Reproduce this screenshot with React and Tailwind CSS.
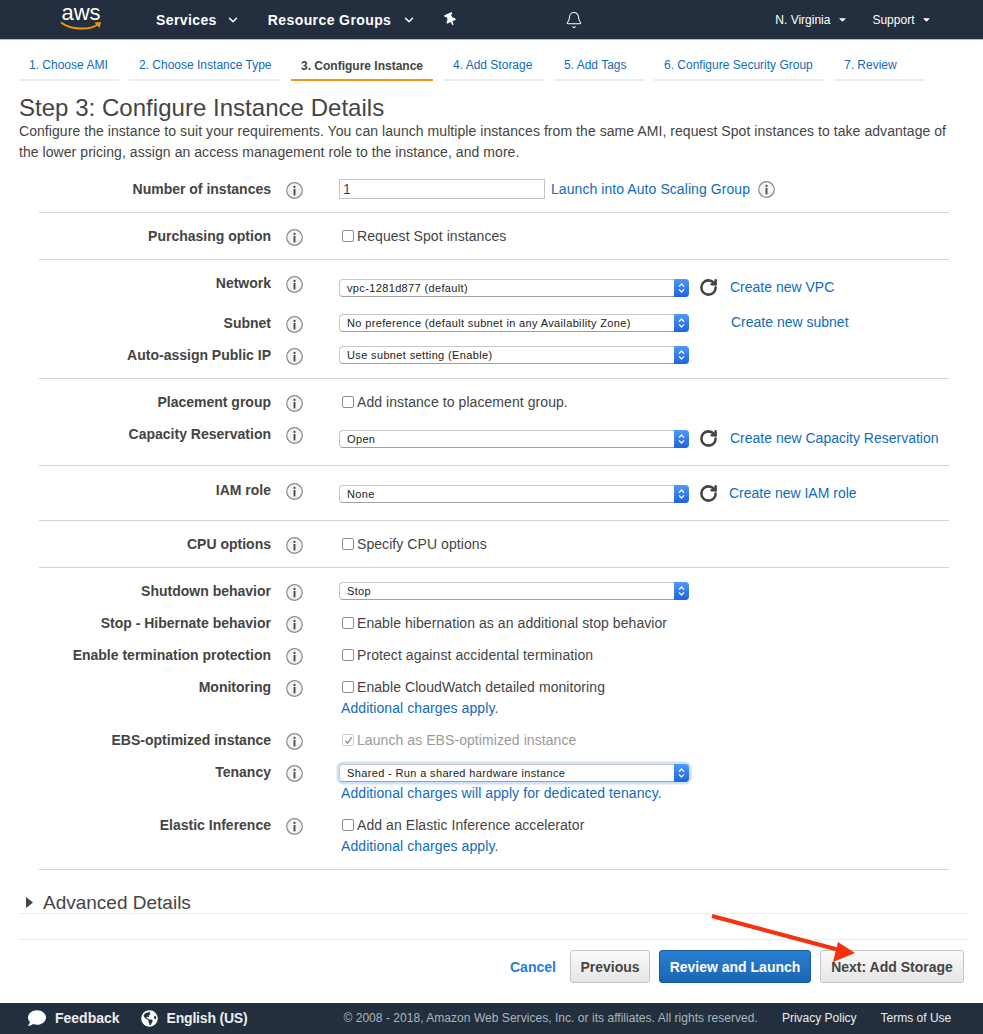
import { Bell, ChevronDown, RotateCw } from 'lucide-react'
import { FaComment, FaGlobeAmericas, FaThumbtack, FaCaretDown } from 'react-icons/fa'

const tabs = [
  { label: '1. Choose AMI', width: 'w-[100px]' },
  { label: '2. Choose Instance Type', width: 'w-[152px]' },
  { label: '3. Configure Instance', width: 'w-[142px]', active: true },
  { label: '4. Add Storage', width: 'w-[101px]' },
  { label: '5. Add Tags', width: 'w-[90px]' },
  { label: '6. Configure Security Group', width: 'w-[170px]' },
  { label: '7. Review', width: 'w-[90px]' },
]

function InfoIcon({ className = '' }) {
  return (
    <svg viewBox="0 0 17 17" className={`h-[17px] w-[17px] shrink-0 ${className}`}>
      <circle cx="8.5" cy="8.5" r="7.8" fill="#f4f4f4" stroke="#8a8a8a" strokeWidth="1.2" />
      <circle cx="8.5" cy="4.9" r="1.1" fill="#444" />
      <rect x="7.6" y="7" width="1.8" height="6.4" fill="#444" />
    </svg>
  )
}

function Select({ value, className = 'mt-px', focused }) {
  return (
    <div
      className={`flex h-[18px] w-[350px] items-stretch rounded-[4px] border border-[#c8c8c8] border-b-[#a0a0a0] bg-white ${className} ${
        focused ? 'shadow-[0_0_0_2.5px_#cfe0f8]' : ''
      }`}
    >
      <span className="flex-1 pl-[7px] text-[11px] leading-[17px] tracking-[0.36px] text-[#222]">{value}</span>
      <span className="-my-px -mr-px flex w-[15px] items-center justify-center rounded-r-[4px] bg-gradient-to-b from-[#4f97f7] to-[#1c64e0]">
        <svg viewBox="0 0 9 12" className="h-[12px] w-[9px]" fill="none" stroke="white" strokeWidth="1.3">
          <path d="M2 4.6 4.5 2 7 4.6M2 7.4 4.5 10 7 7.4" />
        </svg>
      </span>
    </div>
  )
}

function Check({ label, checked, disabled }) {
  return (
    <div className={`flex h-5 items-center text-sm leading-5 tracking-[0.07px] ${disabled ? 'text-[#9a9a9a]' : 'text-[#444]'}`}>
      <span
        className={`ml-[3px] mr-[3px] flex h-3 w-3 items-center justify-center rounded-[2px] border bg-white ${
          disabled ? 'border-[#cfcfcf] bg-[#f2f2f2]' : 'border-[#8f8f8f]'
        }`}
      >
        {checked && (
          <svg viewBox="0 0 10 10" className="h-[9px] w-[9px]" fill="none" stroke="#8d8d8d" strokeWidth="1.6">
            <path d="M1.5 5.2 4 8l4.5-6.5" />
          </svg>
        )}
      </span>
      {label}
    </div>
  )
}

function Note({ children }) {
  return <a className="ml-[2px] mt-px block h-5 text-sm leading-5 tracking-[0.08px] text-[#0f6cbd]">{children}</a>
}

function Row({ label, children, className = '' }) {
  return (
    <div className={`grid grid-cols-[232px_68px_1fr] items-start ${className}`}>
      <div className="h-5 text-right text-sm font-bold leading-5 text-[#444]">{label}</div>
      <InfoIcon className="ml-[15px] mt-[3px]" />
      <div>{children}</div>
    </div>
  )
}

function Section({ children, className = '' }) {
  return <div className={`flex flex-col border-b border-[#cfd3d3] ${className}`}>{children}</div>
}

function CreateLink({ children, refresh, className = 'ml-[10px]', linkClass = '' }) {
  return (
    <div className={`flex h-[18px] items-center ${className}`}>
      {refresh && <RotateCw size={19} strokeWidth={3.2} className="mr-[11px] text-[#444]" />}
      <a className={`whitespace-nowrap text-sm text-[#0f6cbd] ${linkClass}`}>{children}</a>
    </div>
  )
}

export default function App() {
  return (
    <div className="relative flex min-h-[1034px] w-[983px] flex-col bg-white font-['Liberation_Sans',Arial,sans-serif] text-[#444]">
      {/* top nav */}
      <header className="flex h-[40px] items-center border-b border-[#b8bdc2] bg-[#232f3e] text-white">
        <div className="relative ml-[60px] h-[39px] w-[42px]">
          <span className="block text-center text-[22px] leading-[25px]">aws</span>
          <svg viewBox="0 0 42 10" className="absolute left-0 top-[21px] h-[10px] w-[42px]">
            <path d="M1 1.5C11 9 29 9.5 38 3.5" fill="none" stroke="#f79400" strokeWidth="2" />
            <path d="M34.5 1.5 41 1l-1.5 6z" fill="#f79400" />
          </svg>
        </div>
        <span className="ml-[54px] text-sm font-bold tracking-[0.4px]">Services</span>
        <ChevronDown size={14} strokeWidth={2.5} className="ml-[9px]" />
        <span className="ml-[28px] text-sm font-bold tracking-[0.4px]">Resource Groups</span>
        <ChevronDown size={14} strokeWidth={2.5} className="ml-[11px]" />
        <FaThumbtack size={13} className="ml-[28px] -rotate-[25deg]" />
        <Bell size={18} strokeWidth={1.4} className="ml-[108px]" />
        <span className="ml-[192px] text-xs">N. Virginia</span>
        <FaCaretDown size={11} className="ml-[7px]" />
        <span className="ml-[24px] text-xs">Support</span>
        <FaCaretDown size={11} className="ml-[7px]" />
      </header>

      {/* wizard tabs */}
      <nav className="flex h-[41px] gap-[10px] pl-[19px]">
        {tabs.map((tab) => (
          <div
            key={tab.label}
            className={`${tab.width} border-b-[2px] pl-[10px] text-xs leading-[18px] ${
              tab.active ? 'border-[#f7941d] pt-[17px] font-bold text-[#444]' : 'border-[#eaeded] pt-[16px] text-[#0f6cbd]'
            }`}
          >
            {tab.label}
          </div>
        ))}
      </nav>

      <div className="px-[19px]">
        <h1 className="mt-[13px] text-2xl leading-[28px] tracking-[0.03px] text-[#444]">Step 3: Configure Instance Details</h1>
        <p className="-mt-px w-[940px] text-sm leading-[21px] tracking-[0.06px] text-[#444]">
          Configure the instance to suit your requirements. You can launch multiple instances from the same AMI, request Spot
          instances to take advantage of the lower pricing, assign an access management role to the instance, and more.
        </p>
      </div>

      <div className="ml-[39px] mt-[7px] w-[910px]">
        <Section className="pb-[13px] pt-[9px]">
          <Row label="Number of instances">
            <div className="flex h-5 items-center">
              <div className="h-5 w-[206px] border border-[#c4c4c4] pl-[3px] text-sm leading-[18px] text-[#444]">1</div>
              <a className="ml-[6px] whitespace-nowrap text-sm tracking-[0.07px] text-[#0f6cbd]">Launch into Auto Scaling Group</a>
              <InfoIcon className="ml-[8px] mt-px" />
            </div>
          </Row>
        </Section>

        <Section className="pb-[13px] pt-[13px]">
          <Row label="Purchasing option">
            <Check label="Request Spot instances" />
          </Row>
        </Section>

        <Section className="pb-[13px] pt-[13px]">
          <Row label="Network">
            <div className="flex items-start">
              <Select value="vpc-1281d877 (default)" className="mt-[6px]" />
              <CreateLink refresh className="ml-[10px] mt-[5px]" linkClass="ml-px">Create new VPC</CreateLink>
            </div>
          </Row>
          <Row label="Subnet" className="mt-[16px]">
            <div className="flex items-start">
              <Select value="No preference (default subnet in any Availability Zone)" />
              <CreateLink className="ml-[42px]">Create new subnet</CreateLink>
            </div>
          </Row>
          <Row label="Auto-assign Public IP" className="mt-[12px]">
            <Select value="Use subnet setting (Enable)" />
          </Row>
        </Section>

        <Section className="pb-[17px] pt-[13px]">
          <Row label="Placement group">
            <Check label="Add instance to placement group." />
          </Row>
          <Row label="Capacity Reservation" className="mt-[12px]">
            <div className="flex items-start">
              <Select value="Open" className="mt-[6px]" />
              <CreateLink refresh className="ml-[10px] mt-[5px]" linkClass="ml-px">Create new Capacity Reservation</CreateLink>
            </div>
          </Row>
        </Section>

        <Section className="pb-[17px] pt-[14px]">
          <Row label="IAM role">
            <div className="flex items-start">
              <Select value="None" className="mt-[5px]" />
              <CreateLink refresh className="ml-[10px] mt-[4px]">Create new IAM role</CreateLink>
            </div>
          </Row>
        </Section>

        <Section className="pb-[13px] pt-[13px]">
          <Row label="CPU options">
            <Check label="Specify CPU options" />
          </Row>
        </Section>

        <Section className="gap-[12px] pb-[13px] pt-[13px]">
          <Row label="Shutdown behavior">
            <Select value="Stop" />
          </Row>
          <Row label="Stop - Hibernate behavior">
            <Check label="Enable hibernation as an additional stop behavior" />
          </Row>
          <Row label="Enable termination protection">
            <Check label="Protect against accidental termination" />
          </Row>
          <Row label="Monitoring">
            <Check label="Enable CloudWatch detailed monitoring" />
            <Note>Additional charges apply.</Note>
          </Row>
          <Row label="EBS-optimized instance">
            <Check label="Launch as EBS-optimized instance" checked disabled />
          </Row>
          <Row label="Tenancy">
            <Select value="Shared - Run a shared hardware instance" className="mt-[2px]" focused />
            <Note>Additional charges will apply for dedicated tenancy.</Note>
          </Row>
          <Row label="Elastic Inference">
            <Check label="Add an Elastic Inference accelerator" />
            <Note>Additional charges apply.</Note>
          </Row>
        </Section>
      </div>

      {/* advanced details */}
      <div className="ml-[19px] mt-[22px] flex h-[22px] w-[950px] items-center border-b border-[#eaeded]">
        <svg viewBox="0 0 7 11" className="ml-[7px] h-[11px] w-[7px] fill-[#444]">
          <path d="M0 0 7 5.5 0 11z" />
        </svg>
        <span className="ml-[10px] text-[19px] leading-[20px] text-[#444]">Advanced Details</span>
      </div>
      <div className="ml-[19px] mt-[25px] w-[950px] border-t border-[#eaeded]" />

      {/* wizard buttons */}
      <div className="ml-[510px] mt-[10px] flex h-[33px] items-center text-sm font-bold">
        <a className="w-[60px] text-[#267cda]">Cancel</a>
        <button className="h-[33px] w-[80px] rounded-[3px] border border-[#c6c6c6] bg-gradient-to-b from-[#fafafa] to-[#e6e6e6] text-[#444]">
          Previous
        </button>
        <button className="ml-[9px] h-[33px] w-[152px] rounded-[3px] border border-[#15599f] bg-gradient-to-b from-[#2b7fd0] to-[#1a66b5] text-white">
          Review and Launch
        </button>
        <button className="ml-[9px] h-[33px] w-[144px] rounded-[3px] border border-[#c6c6c6] bg-gradient-to-b from-[#fafafa] to-[#e6e6e6] text-[#444]">
          Next: Add Storage
        </button>
      </div>

      {/* footer */}
      <footer className="mt-[20px] flex h-[31px] items-center bg-[#232f3e] pb-px text-white">
        <FaComment size={18} className="ml-[28px]" />
        <span className="ml-[9px] text-sm font-bold text-[#eaeded]">Feedback</span>
        <FaGlobeAmericas size={17} className="ml-[21px]" />
        <span className="ml-[9px] text-sm font-bold tracking-[-0.2px] text-[#eaeded]">English (US)</span>
        <span className="ml-[96px] text-xs tracking-[0.04px] text-[#aab7b8]">© 2008 - 2018, Amazon Web Services, Inc. or its affiliates. All rights reserved.</span>
        <span className="ml-[24px] text-xs text-[#eaeded]">Privacy Policy</span>
        <span className="ml-[24px] text-xs text-[#eaeded]">Terms of Use</span>
      </footer>

      {/* red annotation arrow */}
      <svg viewBox="0 0 983 1034" className="pointer-events-none absolute left-0 top-0 h-[1034px] w-[983px]">
        <path d="M712 916 843 951" stroke="#f8300f" strokeWidth="4" fill="none" />
        <path d="M838 942 855 953 833 962z" fill="#f8300f" />
      </svg>
    </div>
  )
}
